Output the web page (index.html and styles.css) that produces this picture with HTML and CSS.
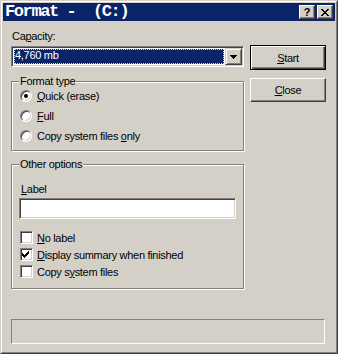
FILE: index.html
```html
<!DOCTYPE html>
<html lang="en">
<head>
  <meta charset="UTF-8">
  <title>Format - (C:)</title>
  <link rel="stylesheet" href="styles.css">
</head>
<body>
  <div class="window">
    <div class="frame">
      <div class="titlebar">
        <span class="title">Format -  (C:)</span>
        <div class="caption-buttons">
          <span class="cap-btn help">?</span>
          <span class="cap-btn">
            <svg width="8" height="7" viewBox="0 0 8 7" shape-rendering="crispEdges">
              <path d="M0 0h2v1h-2z M6 0h2v1h-2z M1 1h2v1h-2z M5 1h2v1h-2z M2 2h4v1h-4z M3 3h2v1h-2z M2 4h4v1h-4z M1 5h2v1h-2z M5 5h2v1h-2z M0 6h2v1h-2z M6 6h2v1h-2z" fill="#000"/>
            </svg>
          </span>
        </div>
      </div>

      <div class="client">
        <div class="left">
          <div class="label">Ca<u>p</u>acity:</div>
          <div class="combo">
            <div class="combo-value">4,760 mb</div>
            <div class="combo-btn">
              <svg width="7" height="4" viewBox="0 0 7 4" shape-rendering="crispEdges">
                <path d="M0 0h7v1h-7z M1 1h5v1h-5z M2 2h3v1h-3z M3 3h1v1h-1z" fill="#000"/>
              </svg>
            </div>
          </div>

          <fieldset class="group format-type">
            <legend>Format type</legend>
            <div class="options">
              <div class="option"><span class="radio checked"></span><span><u>Q</u>uick (erase)</span></div>
              <div class="option"><span class="radio"></span><span><u>F</u>ull</span></div>
              <div class="option"><span class="radio"></span><span>Copy system files <u>o</u>nly</span></div>
            </div>
          </fieldset>

          <fieldset class="group other-options">
            <legend>Other options</legend>
            <div class="label"><u>L</u>abel</div>
            <div class="textbox"></div>
            <div class="checks">
              <div class="option short"><span class="check"></span><span><u>N</u>o label</span></div>
              <div class="option short">
                <span class="check">
                  <svg width="9" height="9" viewBox="0 0 9 9" shape-rendering="crispEdges">
                    <path d="M6 1h1v1h-1z M5 2h2v1h-2z M0 3h1v1h-1z M4 3h3v1h-3z M0 4h2v1h-2z M3 4h3v1h-3z M0 5h5v1h-5z M1 6h3v1h-3z M2 7h1v1h-1z" fill="#000"/>
                  </svg>
                </span>
                <span><u>D</u>isplay summary when finished</span>
              </div>
              <div class="option short"><span class="check"></span><span>Copy s<u>y</u>stem files</span></div>
            </div>
          </fieldset>
        </div>

        <div class="right">
          <button class="btn default"><u>S</u>tart</button>
          <button class="btn"><u>C</u>lose</button>
        </div>

        <div class="status"></div>
      </div>
    </div>
  </div>
</body>
</html>
```

FILE: styles.css
```css
body {
  margin: 0;
  background-color: #d4d0c8;
  font-family: "Liberation Sans", Arial, sans-serif;
  font-size: 11px;
  letter-spacing: -0.3px;
  color: #000;
}
u {
  text-decoration: underline;
  text-underline-offset: 1px;
}

.window {
  width: 338px;
  height: 354px;
  box-sizing: border-box;
  border: 1px solid;
  border-color: #d4d0c8 #404040 #404040 #d4d0c8;
  background-color: #d4d0c8;
}
.frame {
  height: 100%;
  box-sizing: border-box;
  border: 1px solid;
  border-color: #fff #808080 #808080 #fff;
  padding: 1px;
}

/* title bar */
.titlebar {
  height: 18px;
  background-color: #0a246a;
  display: flex;
  align-items: center;
  justify-content: space-between;
  padding: 0 2px 0 2px;
}
.title {
  font-family: "Liberation Mono", "Courier New", monospace;
  font-weight: bold;
  font-size: 17px;
  letter-spacing: -1.4px;
  line-height: 18px;
  color: #fff;
  white-space: pre;
}
.caption-buttons {
  display: flex;
  gap: 2px;
}
.cap-btn {
  width: 16px;
  height: 14px;
  box-sizing: border-box;
  border: 1px solid;
  border-color: #fff #404040 #404040 #fff;
  box-shadow: inset -1px -1px 0 #808080;
  background-color: #d4d0c8;
  display: flex;
  align-items: center;
  justify-content: center;
}
.help {
  font-weight: bold;
  font-size: 11px;
  line-height: 12px;
  letter-spacing: 0;
}

/* client area */
.client {
  display: grid;
  grid-template-columns: 233px 76px;
  column-gap: 6px;
  padding: 9px 0 0 8px;
}
.label {
  line-height: 13px;
  padding-left: 1px;
}

.combo {
  margin-top: 3px;
  height: 21px;
  box-sizing: border-box;
  border: 1px solid;
  border-color: #808080 #fff #fff #808080;
  box-shadow: inset 1px 1px 0 #404040, inset -1px -1px 0 #d4d0c8;
  background-color: #fff;
  padding: 1px;
  display: flex;
}
.combo-value {
  flex: 1;
  margin: 1px;
  background-color: #0a246a;
  border: 1px dotted #e6d890;
  color: #fff;
  line-height: 11px;
  padding-left: 0;
}
.combo-btn {
  width: 17px;
  height: 17px;
  box-sizing: border-box;
  border: 1px solid;
  border-color: #d4d0c8 #404040 #404040 #d4d0c8;
  box-shadow: inset 1px 1px 0 #fff, inset -1px -1px 0 #808080;
  background-color: #d4d0c8;
  display: flex;
  align-items: center;
  justify-content: center;
}

/* group boxes */
.group {
  margin: 0;
  min-width: 0;
  width: 233px;
  box-sizing: border-box;
  border: 1px solid #808080;
  box-shadow: inset 1px 1px 0 #fff, 1px 1px 0 #fff;
  padding: 0 7px 4px 8px;
}
.group legend {
  padding: 0 1px;
  margin-left: -1px;
  line-height: 13px;
  background-color: #d4d0c8;
}
.format-type {
  margin-top: 8px;
}
.options {
  margin-top: -2px;
}
.option {
  height: 20px;
  display: flex;
  align-items: center;
  gap: 5px;
}
.option.short {
  height: 17px;
  gap: 4px;
}

.radio {
  width: 12px;
  height: 12px;
  box-sizing: border-box;
  border-radius: 50%;
  border: 1px solid;
  border-color: #808080 #fff #fff #808080;
  box-shadow: inset 1px 1px 0 #404040, inset -1px -1px 0 #d4d0c8;
  background-color: #fff;
  display: flex;
  align-items: center;
  justify-content: center;
}
.radio.checked::after {
  content: "";
  width: 4px;
  height: 4px;
  border-radius: 50%;
  background-color: #000;
}

.check {
  width: 13px;
  height: 13px;
  box-sizing: border-box;
  border: 1px solid;
  border-color: #808080 #fff #fff #808080;
  box-shadow: inset 1px 1px 0 #404040, inset -1px -1px 0 #d4d0c8;
  background-color: #fff;
  padding: 1px 0 0 1px;
}
.check svg {
  display: block;
}

.other-options {
  margin-top: 7px;
  padding-top: 12px;
  padding-bottom: 8px;
}
.textbox {
  margin: 2px 0 0 -1px;
  width: 217px;
  height: 21px;
  box-sizing: border-box;
  border: 1px solid;
  border-color: #808080 #fff #fff #808080;
  box-shadow: inset 1px 1px 0 #404040, inset -1px -1px 0 #d4d0c8;
  background-color: #fff;
}
.checks {
  margin-top: 10px;
}

/* push buttons */
.right {
  display: flex;
  flex-direction: column;
}
.btn {
  width: 76px;
  height: 24px;
  padding: 0;
  font: inherit;
  letter-spacing: inherit;
  color: #000;
  background-color: #d4d0c8;
  border: 1px solid;
  border-color: #fff #404040 #404040 #fff;
  box-shadow: inset -1px -1px 0 #808080;
  margin-top: 8px;
}
.btn.default {
  margin-top: 15px;
  height: 25px;
  border-color: #000;
  box-shadow: inset 1px 1px 0 #fff, inset -1px -1px 0 #404040, inset -2px -2px 0 #808080;
}

.status {
  grid-column: 1 / -1;
  margin-top: 30px;
  width: 314px;
  height: 25px;
  box-sizing: border-box;
  border: 1px solid;
  border-color: #808080 #fff #fff #808080;
}
```
